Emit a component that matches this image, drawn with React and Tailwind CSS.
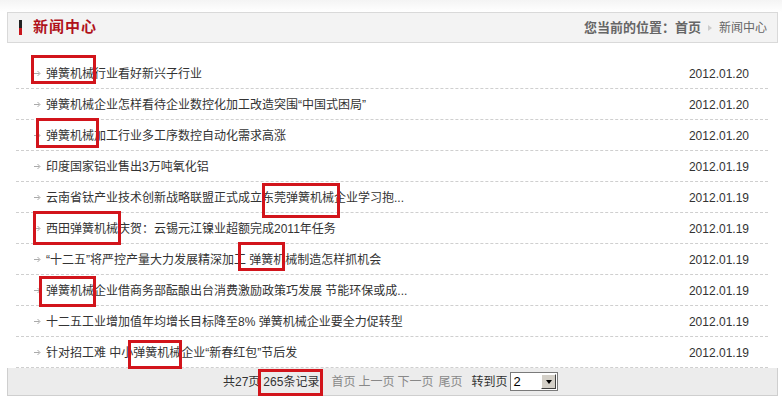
import React from 'react';

const news = [
    { title: '弹簧机械行业看好新兴子行业', date: '2012.01.20' },
    { title: '弹簧机械企业怎样看待企业数控化加工改造突围“中国式困局”', date: '2012.01.20' },
    { title: '弹簧机械加工行业多工序数控自动化需求高涨', date: '2012.01.20' },
    { title: '印度国家铝业售出3万吨氧化铝', date: '2012.01.19' },
    { title: '云南省钛产业技术创新战略联盟正式成立东莞弹簧机械企业学习抱...', date: '2012.01.19' },
    { title: '西田弹簧机械庆贺：云锡元江镍业超额完成2011年任务', date: '2012.01.19' },
    { title: '“十二五”将严控产量大力发展精深加工 弹簧机械制造怎样抓机会', date: '2012.01.19' },
    { title: '弹簧机械企业借商务部酝酿出台消费激励政策巧发展 节能环保或成...', date: '2012.01.19' },
    { title: '十二五工业增加值年均增长目标降至8% 弹簧机械企业要全力促转型', date: '2012.01.19' },
    { title: '针对招工难 中小弹簧机械企业“新春红包”节后发', date: '2012.01.19' },
];

// red annotation boxes drawn over the page
const marks = [
    'left-[31px] top-[55px] w-[65px] h-[29px]',
    'left-[36px] top-[118px] w-[63px] h-[30px]',
    'left-[262px] top-[183px] w-[78px] h-[35px]',
    'left-[33px] top-[211px] w-[88px] h-[34px]',
    'left-[238px] top-[242px] w-[47px] h-[29px]',
    'left-[39px] top-[276px] w-[57px] h-[31px]',
    'left-[128px] top-[340px] w-[54px] h-[29px]',
    'left-[258px] top-[369px] w-[65px] h-[27px]',
];

function Arrow() {
    return (
        <svg width="7" height="7" viewBox="0 0 7 7" className="shrink-0">
            <path d="M0 3.5h5.5" stroke="#aaa" strokeWidth="1" />
            <path d="M3.5 1l2.5 2.5-2.5 2.5" stroke="#aaa" strokeWidth="1" fill="none" />
        </svg>
    );
}

export default function App() {
    return (
        <div
            className="relative w-[782px] h-[414px] bg-white text-[12px] text-[#333] overflow-hidden"
            style={{ fontFamily: '"Liberation Sans", "Noto Sans CJK SC", sans-serif' }}
        >
            <div className="h-[12px] bg-gradient-to-b from-[#f4f4f4] to-white" />

            {/* Title bar */}
            <div className="mx-[7px] mr-[4px] h-[31px] border border-[#d9d9d9] bg-[#f3f3f3] flex items-center justify-between pl-[11px] pr-[10px]">
                <div className="flex items-center gap-[11px]">
                    <div className="w-[3px] h-[15px] flex flex-col">
                        <div className="h-1/2 bg-[#222]" />
                        <div className="h-1/2 bg-[#c8161d]" />
                    </div>
                    <span className="text-[15px] font-bold text-[#b0121b] tracking-[1px]">新闻中心</span>
                </div>
                <div className="flex items-center text-[#666]">
                    <span className="font-bold text-[13px]">您当前的位置：首页</span>
                    <span className="mx-[7px] w-0 h-0 border-y-[3px] border-y-transparent border-l-[4px] border-l-[#ccc]" />
                    <span>新闻中心</span>
                </div>
            </div>

            {/* News list */}
            <ul className="mt-[15px] ml-[16px] mr-[14px]">
                {news.map((n, i) => (
                    <li key={i} className="h-[31px] flex items-center border-b border-dashed border-[#cfcfcf] pl-[18px] pr-[19px] pt-[1px]">
                        <Arrow />
                        <span className="ml-[5px] flex-1 whitespace-nowrap">{n.title}</span>
                        <span className="text-[#333]">{n.date}</span>
                    </li>
                ))}
            </ul>

            {/* Pager */}
            <div className="mx-[7px] mr-[4px] h-[28px] border border-t-0 border-[#cfcfcf] bg-[#ececec] flex items-center pl-[215px]">
                <span>共27页</span>
                <span className="ml-[3px]">265条记录</span>
                <span className="ml-[12px] text-[#888]">首页</span>
                <span className="ml-[3px] text-[#888]">上一页</span>
                <span className="ml-[3px] text-[#888]">下一页</span>
                <span className="ml-[5px] text-[#888]">尾页</span>
                <span className="ml-[9px]">转到页</span>
                <div className="ml-[3px] w-[48px] h-[19px] border border-[#7a7a7a] bg-white flex items-center">
                    <span className="flex-1 pl-[2px] text-[13px] text-black">2</span>
                    <div className="w-[15px] h-[15px] mr-[1px] bg-[#d4d0c8] border border-[#fff] border-r-[#404040] border-b-[#404040] flex items-center justify-center">
                        <span className="w-0 h-0 border-x-[3.5px] border-x-transparent border-t-[4px] border-t-black" />
                    </div>
                </div>
            </div>

            {marks.map((m, i) => (
                <div key={i} className={`absolute border-[3px] border-[#d2141b] ${m}`} />
            ))}
        </div>
    );
}
